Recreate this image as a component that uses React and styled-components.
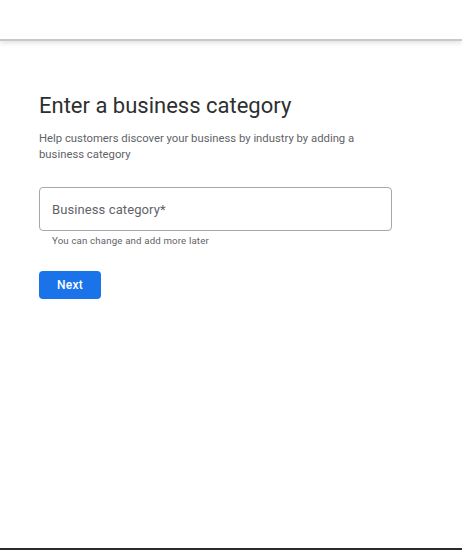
import React from 'react'
import styled, { createGlobalStyle } from 'styled-components'

const GlobalStyle = createGlobalStyle`
  html, body {
    margin: 0;
    padding: 0;
    background: #fff;
  }
  body {
    font-family: Roboto, "Noto Sans", Arial, sans-serif;
  }
`

const Page = styled.div`
  width: 462px;
  height: 550px;
  display: flex;
  flex-direction: column;
  box-sizing: border-box;
  border-bottom: 2px solid #2b2b2b;
  overflow: hidden;
`

const TopBar = styled.div`
  height: 39px;
  flex-shrink: 0;
  background: #fff;
  border-bottom: 2px solid #c9c9c9;
  box-shadow: 0 2px 5px rgba(0, 0, 0, 0.12);
  position: relative;
  z-index: 1;
`

const Content = styled.main`
  padding: 51px 39px 0;
  display: flex;
  flex-direction: column;
  align-items: flex-start;
`

const Title = styled.h1`
  margin: 0;
  font-size: 22px;
  font-weight: 400;
  color: #2e2f31;
  line-height: 28px;
`

const Description = styled.p`
  margin: 11px 0 0;
  width: 353px;
  font-size: 11.3px;
  line-height: 16px;
  color: #5f6368;
  letter-spacing: 0;
`

const Field = styled.div`
  margin-top: 24px;
  width: 353px;
  height: 44px;
  box-sizing: border-box;
  border: 1px solid #a4a7ab;
  border-radius: 4px;
  display: flex;
  align-items: center;
  padding: 0 12px;
`

const Placeholder = styled.span`
  font-size: 13px;
  color: #5f6368;
  letter-spacing: 0.1px;
`

const Helper = styled.div`
  margin: 4px 0 0 13px;
  font-size: 9.7px;
  color: #5f6368;
  letter-spacing: 0.15px;
`

const Button = styled.button`
  margin-top: 25px;
  width: 62px;
  height: 28px;
  border: none;
  border-radius: 4px;
  background: #1a73e8;
  color: #fff;
  font-family: inherit;
  font-size: 12px;
  font-weight: 500;
  letter-spacing: 0.2px;
  cursor: pointer;
`

export default function App() {
  return (
    <>
      <GlobalStyle />
      <Page>
        <TopBar />
        <Content>
          <Title>Enter a business category</Title>
          <Description>
            Help customers discover your business by industry by adding a
            business category
          </Description>
          <Field>
            <Placeholder>Business category*</Placeholder>
          </Field>
          <Helper>You can change and add more later</Helper>
          <Button>Next</Button>
        </Content>
      </Page>
    </>
  )
}
